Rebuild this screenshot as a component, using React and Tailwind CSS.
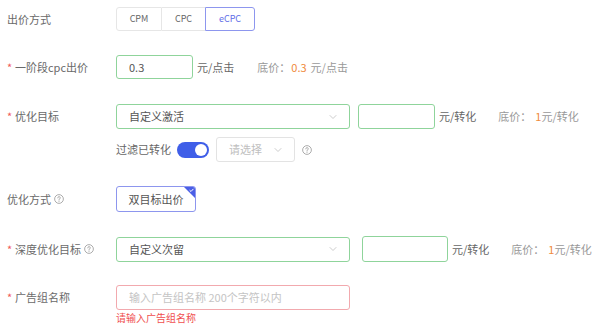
import { ChevronDown } from 'lucide-react';

const font = { fontFamily: '"Noto Sans CJK SC", "Noto Sans", sans-serif' };

function Label({ required, children, help }) {
  return (
    <div className="w-[116px] shrink-0 flex items-center text-[11px] text-[#6a6a6a] pl-[7px]">
      {required ? <span className="text-[#f05a5a] w-[8px]">*</span> : null}
      <span>{children}</span>
      {help && <HelpIcon className="ml-[3px]" />}
    </div>
  );
}

function HelpIcon({ className = '' }) {
  return (
    <svg width="10" height="10" viewBox="0 0 16 16" className={className}>
      <circle cx="8" cy="8" r="7" fill="none" stroke="#999" strokeWidth="1.3" />
      <path d="M6 6.2a2 2 0 1 1 2.6 1.9c-.4.2-.6.5-.6.9v.6" fill="none" stroke="#999" strokeWidth="1.3" strokeLinecap="round" />
      <circle cx="8" cy="11.6" r="0.8" fill="#999" />
    </svg>
  );
}

function Select({ value, width, placeholder, border = 'border-[#8fd49b]' }) {
  return (
    <div className={`h-[25px] ${width} border ${border} rounded-[3px] flex items-center justify-between pl-[12px] pr-[10px] text-[11px]`}>
      <span className={placeholder ? 'text-[#c0c0c0]' : 'text-[#555]'}>{value}</span>
      <ChevronDown size={12} className="text-[#bbb]" strokeWidth={1.5} />
    </div>
  );
}

export default function App() {
  return (
    <div className="w-[600px] h-[334px] bg-white pt-[7px] overflow-hidden" style={font}>
      {/* 出价方式 */}
      <div className="flex items-center">
        <Label>出价方式</Label>
        <div className="flex h-[24px] text-[9px] text-[#666]">
          <div className="w-[46px] border border-[#e6e6e6] rounded-l-[3px] flex items-center justify-center">CPM</div>
          <div className="w-[43px] border-y border-[#e6e6e6] flex items-center justify-center">CPC</div>
          <div className="w-[50px] border border-[#8d96ee] rounded-r-[3px] flex items-center justify-center text-[#5f6ee8]">eCPC</div>
        </div>
      </div>

      {/* 一阶段cpc出价 */}
      <div className="flex items-center mt-[24px]">
        <Label required>一阶段cpc出价</Label>
        <div className="h-[24px] w-[77px] border border-[#8fd49b] rounded-[3px] flex items-center pl-[12px] text-[11px] text-[#555]">0.3</div>
        <span className="ml-[4px] text-[11px] text-[#666]">元/点击</span>
        <span className="ml-[23px] text-[11px] text-[#999]">底价：</span>
        <span className="ml-[1px] text-[11px] text-[#f08a3c]">0.3</span>
        <span className="ml-[4px] text-[11px] text-[#999]">元/点击</span>
      </div>

      {/* 优化目标 */}
      <div className="flex items-center mt-[25px]">
        <Label required>优化目标</Label>
        <Select value="自定义激活" width="w-[234px]" />
        <div className="ml-[8px] h-[25px] w-[77px] border border-[#8fd49b] rounded-[3px]" />
        <span className="ml-[4px] text-[11px] text-[#666]">元/转化</span>
        <span className="ml-[22px] text-[11px] text-[#999]">底价：</span>
        <span className="ml-[4px] text-[11px] text-[#f08a3c]">1</span>
        <span className="text-[11px] text-[#999]">元/转化</span>
      </div>
      <div className="flex items-center mt-[8px] pl-[116px]">
        <span className="text-[11px] text-[#666]">过滤已转化</span>
        <div className="ml-[6px] w-[32px] h-[16px] rounded-full bg-[#3f5ee8] flex items-center justify-end pr-[2px]">
          <div className="w-[12px] h-[12px] rounded-full bg-white" />
        </div>
        <div className="ml-[7px]">
          <Select value="请选择" width="w-[79px]" placeholder border="border-[#e3e3e3]" />
        </div>
        <HelpIcon className="ml-[7px]" />
      </div>

      {/* 优化方式 */}
      <div className="flex items-center mt-[24px]">
        <Label help>优化方式</Label>
        <div className="relative h-[26px] w-[80px] border border-[#8d96ee] rounded-[3px] flex items-center justify-center text-[11px] text-[#555] overflow-hidden">
          双目标出价
          <svg width="11" height="11" viewBox="0 0 11 11" className="absolute top-0 right-0">
            <path d="M0 0H11V11Z" fill="#4b5fe6" />
            <path d="M5.6 3.2l1.4 1.3 2.4-2.6" fill="none" stroke="#fff" strokeWidth="1" />
          </svg>
        </div>
      </div>

      {/* 深度优化目标 */}
      <div className="flex items-center mt-[24px]">
        <Label required help>深度优化目标</Label>
        <Select value="自定义次留" width="w-[234px]" />
        <div className="ml-[12px] h-[26px] w-[86px] border border-[#8fd49b] rounded-[3px]" />
        <span className="ml-[4px] text-[11px] text-[#666]">元/转化</span>
        <span className="ml-[22px] text-[11px] text-[#999]">底价：</span>
        <span className="ml-[4px] text-[11px] text-[#f08a3c]">1</span>
        <span className="text-[11px] text-[#999]">元/转化</span>
      </div>

      {/* 广告组名称 */}
      <div className="flex items-center mt-[23px]">
        <Label required>广告组名称</Label>
        <div className="h-[25px] w-[234px] border border-[#f2a9ae] rounded-[3px] flex items-center pl-[12px] text-[11px] text-[#c4c4c4]">
          输入广告组名称 200个字符以内
        </div>
      </div>
      <div className="pl-[116px] mt-[2px] text-[10px] leading-[12px] text-[#f05050]">请输入广告组名称</div>
    </div>
  );
}
